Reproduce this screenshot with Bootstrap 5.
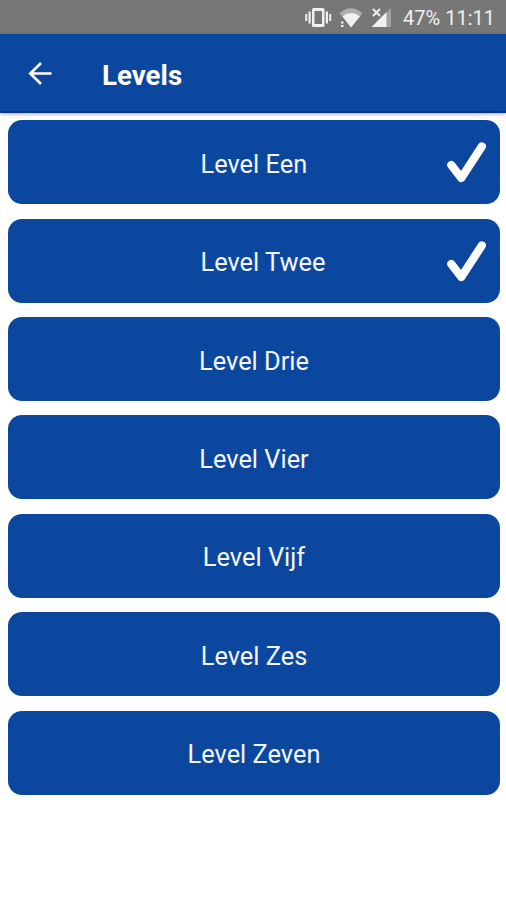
<!DOCTYPE html>
<html lang="nl">
<head>
<meta charset="utf-8">
<meta name="viewport" content="width=device-width, initial-scale=1">
<title>Levels</title>
<link rel="stylesheet" href="https://cdn.jsdelivr.net/npm/bootstrap@5.3.0/dist/css/bootstrap.min.css">
<style>
body { font-family: Roboto, "Liberation Sans", sans-serif; background: #fff; min-height: 900px; }
.statusbar { height: 34px; background: #777; color: #f0f0f0; padding: 2px 11px 0 0; gap: 9.5px; font-size: 20px; line-height: 32px; }
.topbar { height: 79px; background: #0c479f; padding: 0 0 0 25px; border-bottom: 2px solid #03309a; box-shadow: 0 1px 4px rgba(0,0,0,.35); }
.topbar h1 { font-size: 27.7px; line-height: 32px; margin: 6px 0 0 47px; }
.levels { padding: 7.3px 6.5px 0 7.5px; gap: 14.4px; }
.level { height: 84px; border-radius: 14px; background: #0c479f; border: 0; font-size: 25.4px; line-height: 30px; padding: 3px 0 0 1px; color: #f4f7ff; }
.level:hover { background: #0c479f; color: #f4f7ff; }
.level-done { padding: 3px 13.5px 0 193px; }
.level-done svg { margin-bottom: 3px; }
</style>
</head>
<body>
<header>
  <div class="statusbar d-flex align-items-center justify-content-end">
    <svg width="90" height="24" viewBox="304 6 90 24" fill="#f0f0f0" aria-hidden="true">
      <path fill-rule="evenodd" d="M313.500 8h9.500a1.500 1.500 0 0 1 1.500 1.500v16a1.500 1.500 0 0 1-1.500 1.500h-9.500a1.500 1.500 0 0 1-1.500-1.500v-16a1.500 1.500 0 0 1 1.500-1.500zM314.500 11v13h7.500v-13z"/>
      <path d="M308.500 11.500h2.200v12h-2.200zM305.200 14h2v7h-2zM325.800 11.500h2.200v12h-2.200zM329.200 14h2v7h-2z"/>
      <path opacity=".45" d="M339.500 13.200Q351 3.500 362.500 13.200L351 27.500z"/>
      <path d="M342.500 16.300Q351 9.500 360 16.300L351 27.500zM341 21.500h2.500v2h-2.500zM341 25h2.500v2h-2.500z"/>
      <path opacity=".35" d="M391 8v19h-5V13z"/>
      <path d="M386.500 12v15H371.500z"/>
      <path d="M373 9l7 7M380 9l-7 7" stroke="#777" stroke-width="4"/>
      <path d="M373 9l7 7M380 9l-7 7" stroke="#f0f0f0" stroke-width="1.800"/>
    </svg>
    <span>47% 11:11</span>
  </div>
  <nav class="topbar d-flex align-items-center text-white">
    <svg width="30" height="30" viewBox="25 58 30 30" fill="none" stroke="#fff" stroke-width="2.600" role="img" aria-label="Terug"><path d="M51.500 73.500H30.500M41 63L30.300 73.500 41 84"/></svg>
    <h1 class="fw-bold">Levels</h1>
  </nav>
</header>
<main class="levels d-flex flex-column">
  <button class="btn level level-done d-flex align-items-center justify-content-between">Level Een
    <svg width="40" height="42" viewBox="447 141 40 42" fill="none" stroke="#fff" stroke-width="8.200" stroke-linecap="round" stroke-linejoin="round" role="img" aria-label="Voltooid"><path d="M452.300 165L462.300 178 482.800 146.500"/></svg>
  </button>
  <button class="btn level level-done d-flex align-items-center justify-content-between">Level Twee
    <svg width="40" height="42" viewBox="447 141 40 42" fill="none" stroke="#fff" stroke-width="8.200" stroke-linecap="round" stroke-linejoin="round" role="img" aria-label="Voltooid"><path d="M452.300 165L462.300 178 482.800 146.500"/></svg>
  </button>
  <button class="btn level">Level Drie</button>
  <button class="btn level">Level Vier</button>
  <button class="btn level">Level Vijf</button>
  <button class="btn level">Level Zes</button>
  <button class="btn level">Level Zeven</button>
</main>
<script src="https://cdn.jsdelivr.net/npm/bootstrap@5.3.0/dist/js/bootstrap.bundle.min.js"></script>
</body>
</html>
